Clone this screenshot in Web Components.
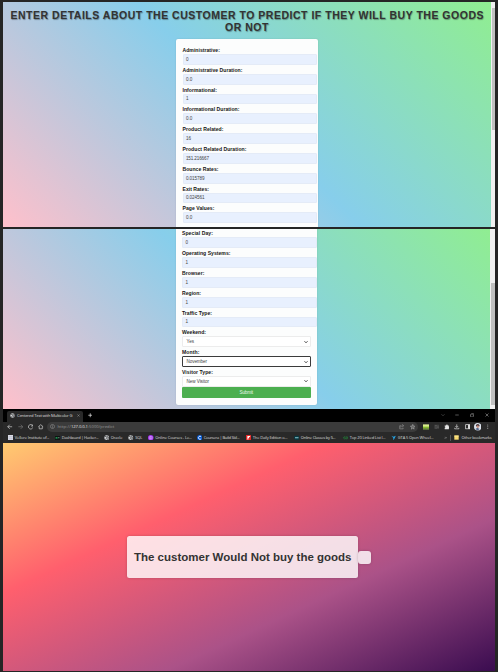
<!DOCTYPE html>
<html lang="en"><head><meta charset="utf-8"><title>Customer purchase prediction</title>
<style>
html,body{margin:0;height:672px;overflow:hidden;background:#252525;font-family:"Liberation Sans",Arial,sans-serif}
</style></head><body>
<demo-board></demo-board>
<script>
const define=(name,html,setup)=>customElements.define(name,class extends HTMLElement{
  connectedCallback(){
    if(this.shadowRoot)return;
    this.attachShadow({mode:'open'}).innerHTML=typeof html==='function'?html(this):html;
    if(setup)setup(this);
  }
});

/* One line of text spread over a given width through its letter spacing */
define('fit-text','<style>:host{display:block;white-space:nowrap}span{display:inline-block}</style><span></span>',el=>{
  const s=el.shadowRoot.querySelector('span');
  s.textContent=el.getAttribute('text');
  const w=+el.getAttribute('w'),n=s.textContent.length;
  s.style.fontSize='100px';
  const natural=s.getBoundingClientRect().width;
  s.style.fontSize='';
  const size=parseFloat(getComputedStyle(s).fontSize);
  s.style.letterSpacing=((w-natural*size/100)/n)+'px';
});

const icons={
  globe:'<circle cx="8" cy="8" r="7" fill="#d5d8db"/><path d="M3 4l4 1 2 3-3 2-1 4M10 2l-1 3 4 2 2-1M10 14l1-4 3-1" stroke="#333" stroke-width="2" fill="none"/>',
  back:'<path d="M15 8H2M8 2L2 8l6 6" stroke="#d0d0d0" stroke-width="2" fill="none"/>',
  forward:'<path d="M1 8h13M8 2l6 6-6 6" stroke="#777" stroke-width="2" fill="none"/>',
  reload:'<path d="M13.500 5A6.500 6.500 0 1 0 14 10M14 1v5H9" stroke="#d0d0d0" stroke-width="2" fill="none"/>',
  home:'<path d="M1 8l7-6 7 6M3.500 7v7h9V7" stroke="#d0d0d0" stroke-width="2" fill="none"/>',
  info:'<circle cx="8" cy="8" r="6.500" stroke="#999" stroke-width="1.700" fill="none"/><path d="M8 7v5M8 4v2" stroke="#999" stroke-width="1.700"/>',
  share:'<path d="M6 5H2v9h10v-3M5 10c0-4 3-5 6-5M9 1l5 4-5 4" stroke="#999" stroke-width="1.700" fill="none"/>',
  star:'<path d="M8 1l2 5 5 .5-4 3.500 1 5-4-3-4 3 1-5L1 6.500 6 6z" stroke="#a5a5a5" stroke-width="1.700" fill="#666"/>',
  image:'<rect y="1" width="16" height="14" fill="#d9ec8c"/><path d="M0 7h16v5H0z" fill="#83b92e"/><path d="M0 12h16v3H0z" fill="#37501d"/>',
  dim:'<rect x="1" y="2" width="14" height="12" fill="#424242"/><path d="M3 5h5M9 9h5M4 12h4" stroke="#666" stroke-width="2"/>',
  puzzle:'<path d="M2 4h4a2.500 2.500 0 1 1 5 0h3v4a2.500 2.500 0 1 1 0 5v2H2v-4a2 2 0 1 0 0-4z" fill="#e5e5e5"/>',
  download:'<path d="M8 1v9M4 6l4 4 4-4M2 11v3h12v-3" stroke="#d8d8d8" stroke-width="2" fill="none"/>',
  panel:'<rect x="2" y="2" width="12" height="12" stroke="#eee" stroke-width="2" fill="none"/><path d="M9 2h5v12H9z" fill="#eee"/>',
  avatar:'<circle cx="8" cy="8" r="8" fill="#dbe2eb"/><path d="M4 5q4-6 8 0l-1 3L8 6 5 8z" fill="#49373c"/><circle cx="8" cy="8" r="2.500" fill="#c98e7c"/><path d="M3 13l4-3 5 3-4 3z" fill="#53668a"/>',
  menu:'<g fill="#aaa"><circle cx="8" cy="3" r="1.500"/><circle cx="8" cy="8" r="1.500"/><circle cx="8" cy="13" r="1.500"/></g>',
  chevron:'<path d="M2 5l6 6 6-6" stroke="#888" stroke-width="1.700" fill="none"/>',
  minus:'<path d="M1 8h14" stroke="#aaa" stroke-width="2"/>',
  restore:'<rect x="2" y="4" width="10" height="10" rx="2" stroke="#aaa" stroke-width="2" fill="none"/><path d="M5 1h8q2 0 2 2v8" stroke="#aaa" stroke-width="1.500" fill="none"/>',
  close:'<path d="M2 2l12 12M14 2L2 14" stroke="#bbb" stroke-width="2"/>',
  plus:'<path d="M8 1v14M1 8h14" stroke="#eee" stroke-width="2.400"/>',
  sheet:'<rect width="16" height="16" fill="#d8dae4"/><path d="M2 5h12M2 11h12" stroke="#aab" stroke-width="1.500"/>',
  hacker:'<rect y="3" width="16" height="11" fill="#0a1411"/><path d="M3 6v5M3 8h3M6 6v5" stroke="#28b463" stroke-width="2"/><path d="M9 8h4" stroke="#bbb" stroke-width="2"/>',
  purple:'<circle cx="8" cy="8" r="8" fill="#a435f0"/><path d="M4 5h8v6H4zM8 3v10" stroke="#dfb8fb" stroke-width="1.500" fill="none"/>',
  coursera:'<circle cx="8" cy="8" r="8" fill="#0056d2"/><path d="M12 5a4.500 4.500 0 1 0 0 6" stroke="#fff" stroke-width="2.500" fill="none"/>',
  flip:'<rect width="16" height="16" fill="#e12828"/><path d="M4 3h8v3H9v3H7v4H4z" fill="#fff"/>',
  teal:'<rect y="2" width="16" height="12" rx="5" fill="#073a43"/><path d="M3 8h10" stroke="#90c4cf" stroke-width="3"/>',
  geeks:'<path d="M7 5a3.500 3.500 0 1 0 0 6V8H1M9 5a3.500 3.500 0 1 1 0 6V8h6" stroke="#26803a" stroke-width="1.700" fill="none"/>',
  bird:'<path d="M1 2l6 3 7-3-3 7-3 5-2-1 1-4z" fill="#27a5e5"/>',
  folder:'<path d="M1 1h14v14H1z" fill="#f7d96f"/><path d="M1 4h14" stroke="#ffebA0" stroke-width="2"/>',
  more:'<path d="M3 4l4 4-4 4M8 4l4 4-4 4" stroke="#ccc" stroke-width="1.700" fill="none"/>'
};
define('ui-icon',el=>`<style>:host{display:block;flex:none;width:${el.getAttribute('size')||5}px;height:${el.getAttribute('size')||5}px}svg{display:block}</style><svg width="100%" height="100%" viewBox="0 0 16 16">${icons[el.getAttribute('name')]}</svg>`);

define('form-field',el=>{
  const sel=el.hasAttribute('select'),foc=el.hasAttribute('focused');
  return `<style>:host{display:block;height:19.8px}
  .l{height:9px;font:bold 5.1px/11px "Liberation Sans",Arial,sans-serif;color:#151515}
  .i{box-sizing:border-box;height:10.8px;display:flex;align-items:center;justify-content:space-between;padding:0 2px 0 ${sel?3.5:2.4}px;border-radius:1px;font-size:4.6px;color:#444;
  width:${sel?128.5:134.5}px;background:${sel?'#fff':'#e8f0fe'};border:${foc?'1px solid #444':'.5px solid transparent'};border-color:${foc?'#3b3b3b':sel?'#ececec':'#e4ebf7'}}
  svg{display:block}</style>
  <div class="l"><fit-text text="${el.getAttribute('label')}" w="${el.getAttribute('lw')}"></fit-text></div>
  <div class="i"><fit-text text="${el.getAttribute('value')}" w="${el.getAttribute('vw')}"></fit-text>${sel?'<svg width="4" height="4" viewBox="0 0 8 8"><path d="M1 2.500l3 3 3-3" stroke="#222" stroke-width="1.700" fill="none"/></svg>':''}</div>`;
});

define('scroll-bar',el=>`<style>:host{display:block;background:#f1f1f1;width:${el.getAttribute('w')}px;flex:none}
 div{margin-left:1px;background:#c1c1c1;height:${el.getAttribute('thumb')}px}i{display:block;height:${el.getAttribute('before')}px}</style><i></i><div></div>`);

define('form-screen',`<style>:host{display:flex;overflow:hidden;background:linear-gradient(45deg,#ffc0cb,#87ceeb,#90ee90)}
 .c{flex:1;display:flex;flex-direction:column;align-items:flex-start;min-width:0}::slotted(*){flex-shrink:0}</style><div class="c"><slot></slot></div><slot name="bar"></slot>`);

define('page-title',`<style>:host{display:block;box-sizing:border-box;width:100%;height:36.5px;padding-top:6.500px;font:bold 10.5px/12px "Liberation Sans",Arial,sans-serif;color:#333;text-shadow:.6px .6px 1px rgba(0,0,0,.35)}
 .a{margin-left:7.500px}.b{margin-left:222px}</style>
 <fit-text class="a" text="ENTER DETAILS ABOUT THE CUSTOMER TO PREDICT IF THEY WILL BUY THE GOODS" w="473.500"></fit-text><fit-text class="b" text="OR NOT" w="44"></fit-text>`);

define('form-card',`<style>:host{display:block;box-sizing:border-box;margin-left:173px;width:141.500px;background:#fcfdfd;box-shadow:0 0 2px rgba(0,0,0,.12)}</style><slot></slot>`);

define('submit-button',`<style>:host{display:block;width:128.5px;height:11.5px;border-radius:1px;background:#4caf50;color:#e8f5e8;font-size:4.6px;line-height:11.5px}fit-text{margin-left:57.5px}</style><fit-text text="Submit" w="13.500"></fit-text>`);

const cell=(n,w,s=5.5)=>`<span class="cell" style="width:${w}px"><ui-icon name="${n}" size="${s}"></ui-icon></span>`;
const marks=[['sheet','Vellore Institute of...',47,34.5],['hacker','Dashboard | Hacker...',49,36.5],['globe','Oracle',24.5,11.5],['globe','SQL',20,7],['purple','Online Courses - Le...',48.5,36.5],['coursera','Coursera | Build Skil...',49,35.5],['flip','The Daily Edition o...',48,34.5],['teal','Online Classes by S...',49,34.5],['geeks','Top 20 Linked List I...',48,35.5],['bird','GTA 5 Open Wheel...',53,35.5]];
define('browser-chrome',`<style>
 :host{display:flex;flex-direction:column;height:34px;background:#292929;color:#ddd;font-size:4.2px;font-family:"Open Sans","Noto Sans",sans-serif}
 .tabs{height:12.500px;background:#000;display:flex;align-items:flex-end}
 .tab{box-sizing:border-box;width:76px;height:11px;margin-left:3.500px;background:#292929;border-radius:2px 2px 0 0;display:flex;align-items:center;padding:0 0 1.500px 3px;gap:2.500px}
 .tab fit-text{width:57px}
 .plus{margin:0 0 4px 5px}.sp{flex:1}
 .win{display:flex;height:10.500px;width:58.500px;margin-bottom:1.500px}.cell{display:flex;align-items:center;justify-content:center;flex:none}
 .bar{height:10.500px;display:flex;align-items:center;padding-left:2px}
 .bar>.cell,.win>.cell{height:100%}
 .url{box-sizing:border-box;width:371px;height:10px;border-radius:5px;background:#3b3b3b;display:flex;align-items:center;padding:0 0 0 3px;margin-left:.5px;color:#999}
 .url fit-text{margin-left:2.500px}.host{color:#e4e4e4}
 .marks{height:11px;display:flex;align-items:center;padding-left:4.500px;font-size:4px}
 .m{display:flex;align-items:center;gap:1.800px;flex:none}
 .rule{width:.5px;height:6px;background:#555;margin:0 3.500px 0 3px}
 </style>
 <div class="tabs"><div class="tab"><ui-icon name="globe" size="5"></ui-icon><fit-text text="Centered Text with Multicolor G" w="55.500"></fit-text><ui-icon name="close" size="3"></ui-icon></div><ui-icon class="plus" name="plus" size="4.500"></ui-icon><span class="sp"></span>
 <div class="win">${cell('chevron',13,4)}${cell('minus',15,4)}${cell('restore',15,4.5)}${cell('close',15,4)}</div></div>
 <div class="bar">${cell('back',10.300)}${cell('forward',10.300)}${cell('reload',10.300)}${cell('home',10.600)}
 <div class="url"><ui-icon name="info" size="5"></ui-icon><fit-text text="http://" w="13.500"></fit-text><fit-text class="host" style="margin:0" text="127.0.0.1" w="17"></fit-text><fit-text style="margin:0" text=":5000/predict" w="26.500"></fit-text><span class="sp"></span>${cell('share',10.5)}${cell('star',10.5)}</div>
 <span style="width:3px"></span>${cell('image',10.3,6)}${cell('dim',10.3)}${cell('puzzle',10.3)}${cell('download',10.3)}${cell('panel',10.3)}${cell('avatar',10.3,7.500)}${cell('menu',10.3)}</div>
 <div class="marks">${marks.map(m=>`<div class="m" style="width:${m[2]}px"><ui-icon name="${m[0]}" size="5.5"></ui-icon><fit-text text="${m[1]}" w="${m[3]}"></fit-text></div>`).join('')}<ui-icon name="more" size="3.500"></ui-icon><span class="rule"></span><div class="m" style="gap:2.5px"><ui-icon name="folder" size="5"></ui-icon><fit-text text="Other bookmarks" w="30"></fit-text></div></div>`);

define('result-screen',`<style>:host{display:flex;align-items:center;height:228px;box-sizing:border-box;background:linear-gradient(to bottom right,#ffcb70,#ff5f6d 33%,#ab5288 66.500%,#3a0c50)}
 .r,.e{box-sizing:border-box;background:rgba(255,255,255,.81);box-shadow:0 0 3px rgba(0,0,0,.2);border-radius:2.500px}
 .r{margin-left:124px;width:231px;height:41.500px;padding-left:7px;font:bold 11.500px/43px "Liberation Sans",Arial,sans-serif;color:#333}
 .e{width:13px;height:13px;border-radius:3px}</style>
 <div class="r"><fit-text text="The customer Would Not buy the goods" w="217.500"></fit-text></div><div class="e"></div>`);

const f=(l,lw,v,vw,x='')=>`<form-field label="${l}" lw="${lw}" value="${v}" vw="${vw}" ${x}></form-field>`;
define('demo-board',`<style>:host{display:grid;grid-template-rows:225px 182px 34px 228px;box-sizing:border-box;height:672px;padding:2px 3px 1px}
 .two{margin-top:2px}
 .c1{padding:6.500px 0 10px 6.500px;border-radius:2px 2px 0 0}.c2{padding:0 0 6.300px 6px;width:141px;margin-top:-.6px;border-radius:0 0 2px 2px}</style>
 <form-screen><page-title></page-title><form-card class="c1">
 ${f('Administrative:',37.500,'0',3)}${f('Administrative Duration:',60,'0.0',6.500)}${f('Informational:',34.500,'1',2.500)}${f('Informational Duration:',57,'0.0',6.500)}${f('Product Related:',41,'16',5)}${f('Product Related Duration:',64,'151.216667',23)}${f('Bounce Rates:',36,'0.015789',18.500)}${f('Exit Rates:',26.500,'0.024561',18.500)}${f('Page Values:',32,'0.0',6.500)}
 </form-card><scroll-bar slot="bar" w="4" before="6" thumb="122"></scroll-bar></form-screen>
 <form-screen class="two"><form-card class="c2">
 ${f('Special Day:',31,'0',3)}${f('Operating Systems:',48.500,'1',2.500)}${f('Browser:',22.500,'1',2.500)}${f('Region:',19,'1',2.500)}${f('Traffic Type:',30,'1',2.500)}${f('Weekend:',24,'Yes',7.500,'select')}${f('Month:',17.500,'November',20.500,'select focused')}${f('Visitor Type:',31,'New Visitor',22.500,'select')}<submit-button></submit-button>
 </form-card><scroll-bar slot="bar" w="5" before="54" thumb="122"></scroll-bar></form-screen>
 <browser-chrome></browser-chrome><result-screen></result-screen>`);
</script></body></html>
